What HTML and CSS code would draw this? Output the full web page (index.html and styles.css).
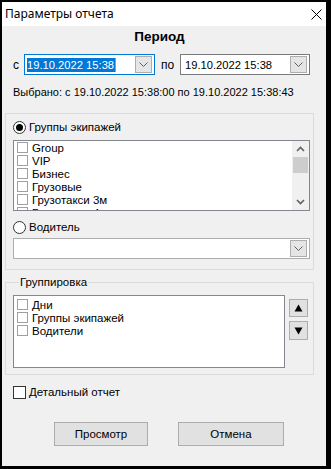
FILE: index.html
```html
<!DOCTYPE html>
<html lang="ru">
<head>
<meta charset="utf-8">
<link rel="stylesheet" href="styles.css">
</head>
<body>
<div class="window">
  <div class="titlebar">
    <span class="title">Параметры отчета</span>
    <svg class="close" width="11" height="11" viewBox="0 0 11 11"><path d="M0.5 0.5 L10.5 10.5 M10.5 0.5 L0.5 10.5" stroke="#000" stroke-width="1" fill="none"/></svg>
  </div>
  <div class="content">
    <div class="period">Период</div>
    <div class="daterow">
      <span class="lbl-s">с</span>
      <div class="combo focused c1">
        <span class="sel">19.10.2022 15:38</span><span class="caret"></span>
        <span class="dd"><svg width="9" height="5" viewBox="0 0 9 5"><path d="M0.5 0.5 L4.5 4.5 L8.5 0.5" stroke="#606060" fill="none"/></svg></span>
      </div>
      <span class="lbl-po">по</span>
      <div class="combo c2">
        <span class="val">19.10.2022 15:38</span>
        <span class="dd"><svg width="9" height="5" viewBox="0 0 9 5"><path d="M0.5 0.5 L4.5 4.5 L8.5 0.5" stroke="#606060" fill="none"/></svg></span>
      </div>
    </div>
    <div class="chosen">Выбрано: с 19.10.2022 15:38:00 по 19.10.2022 15:38:43</div>

    <div class="group g1">
      <div class="radio"><span class="rb checked"></span><span>Группы экипажей</span></div>
      <div class="listbox lb1">
        <div class="items">
          <div class="item"><span class="cb"></span>Group</div>
          <div class="item"><span class="cb"></span>VIP</div>
          <div class="item"><span class="cb"></span>Бизнес</div>
          <div class="item"><span class="cb"></span>Грузовые</div>
          <div class="item"><span class="cb"></span>Грузотакси 3м</div>
          <div class="item"><span class="cb"></span>Грузотакси 4м</div>
        </div>
        <div class="scrollbar">
          <span class="arr"><svg width="9" height="6" viewBox="0 0 9 6"><path d="M1 5 L4.5 1.5 L8 5" stroke="#606060" stroke-width="1.6" fill="none"/></svg></span>
          <span class="thumb"></span>
          <span class="track"></span>
          <span class="arr"><svg width="9" height="6" viewBox="0 0 9 6"><path d="M1 1 L4.5 4.5 L8 1" stroke="#606060" stroke-width="1.6" fill="none"/></svg></span>
        </div>
      </div>
      <div class="radio r2"><span class="rb"></span><span>Водитель</span></div>
      <div class="combo wide">
        <span class="val"></span>
        <span class="dd"><svg width="9" height="5" viewBox="0 0 9 5"><path d="M0.5 0.5 L4.5 4.5 L8.5 0.5" stroke="#606060" fill="none"/></svg></span>
      </div>
    </div>

    <fieldset class="g2">
      <legend>Группировка</legend>
      <div class="g2row">
        <div class="listbox lb2">
          <div class="items">
            <div class="item"><span class="cb"></span>Дни</div>
            <div class="item"><span class="cb"></span>Группы экипажей</div>
            <div class="item"><span class="cb"></span>Водители</div>
          </div>
        </div>
        <div class="updown">
          <span class="ub up"><svg width="9" height="8" viewBox="0 0 9 8"><path d="M4.5 0.5 L8.5 7.5 L0.5 7.5 Z" fill="#000"/></svg></span>
          <span class="ub down"><svg width="9" height="8" viewBox="0 0 9 8"><path d="M0.5 0.5 L8.5 0.5 L4.5 7.5 Z" fill="#000"/></svg></span>
        </div>
      </div>
    </fieldset>

    <div class="detail"><span class="cb big"></span><span>Детальный отчет</span></div>

    <div class="buttons">
      <span class="btn b1">Просмотр</span>
      <span class="btn b2">Отмена</span>
    </div>
  </div>
</div>
</body>
</html>
```

FILE: styles.css
```css
* { box-sizing: border-box; }
html, body { margin: 0; padding: 0; }
body {
  width: 331px;
  height: 469px;
  background: #000;
  font-family: "Liberation Sans", Arial, sans-serif;
  font-size: 11px;
  color: #000;
  overflow: hidden;
}
.window {
  width: 331px;
  height: 469px;
  border-style: solid;
  border-color: #000;
  border-width: 2px 5px 3px 2px;
  background: #f0f0f0;
  display: flex;
  flex-direction: column;
}
.titlebar {
  height: 24px;
  flex: none;
  background: #fff;
  display: flex;
  align-items: center;
  justify-content: space-between;
  padding: 0 4px 0 3px;
}
.title {
  font-family: "Noto Sans", "Open Sans", sans-serif;
  font-size: 12px;
  line-height: 16px;
}
.close { margin-top: 1px; }
.content { flex: 1; display: flex; flex-direction: column; }

.period {
  margin: 3px 0 0 3px;
  width: 309px;
  text-align: center;
  font-weight: bold;
  font-size: 13.5px;
  line-height: 16px;
}
.daterow {
  margin-top: 9px;
  display: flex;
  align-items: center;
  height: 21px;
}
.lbl-s { width: 22px; padding-left: 11px; font-size: 12px; }
.lbl-po { width: 25px; padding-left: 6px; font-size: 12px; }

.combo {
  height: 21px;
  background: #fff;
  border: 1px solid #7a7a7a;
  display: flex;
  align-items: center;
  padding: 1px 2px 1px 2px;
}
.combo.focused { border-color: #0078d7; }
.c1 { width: 131px; }
.c2 { width: 130px; }
.combo .sel {
  background: #0078d7;
  color: #fff;
  font-size: 11.2px;
  line-height: 14px;
  padding-right: 1px;
  white-space: nowrap;
}
.combo .caret { width: 1px; height: 14px; background: #ff8a00; }
.combo .val { font-size: 11.2px; padding-left: 2px; flex: 1; white-space: nowrap; }
.combo .dd {
  margin-left: auto;
  width: 17px;
  height: 17px;
  background: #e5e5e5;
  border: 1px solid #adadad;
  display: flex;
  align-items: center;
  justify-content: center;
}

.chosen {
  margin: 10px 0 0 11px;
  line-height: 14px;
  white-space: nowrap;
}

.group.g1 {
  margin: 14px 0 0 3px;
  width: 309px;
  height: 157px;
  border: 1px solid #dcdcdc;
  padding: 6px 3px 0 7px;
}
.radio {
  display: flex;
  align-items: center;
  height: 14px;
  font-size: 11.5px;
}
.rb {
  width: 13px;
  height: 13px;
  border: 1px solid #333;
  border-radius: 50%;
  background: #fff;
  margin-right: 3px;
  display: flex;
  align-items: center;
  justify-content: center;
}
.rb.checked::after {
  content: "";
  width: 7px;
  height: 7px;
  border-radius: 50%;
  background: #000;
}
.r2 { margin-top: 9px; }

.listbox {
  background: #fff;
  border: 1px solid #828790;
  display: flex;
  overflow: hidden;
}
.lb1 { margin-top: 6px; width: 297px; height: 71px; }
.items { flex: 1; padding-left: 3px; }
.item {
  display: flex;
  align-items: center;
  height: 13px;
  font-size: 11.5px;
  white-space: nowrap;
}
.cb {
  width: 11px;
  height: 11px;
  border: 1px solid #a0a0a0;
  background: #fff;
  margin-right: 4px;
  flex: none;
}
.scrollbar {
  width: 17px;
  background: #f0f0f0;
  display: flex;
  flex-direction: column;
}
.scrollbar .arr {
  height: 16px;
  display: flex;
  align-items: center;
  justify-content: center;
}
.scrollbar .thumb {
  height: 16px;
  margin: 0 1px;
  background: #cdcdcd;
}
.scrollbar .track { flex: 1; }

.combo.wide {
  margin-top: 4px;
  width: 297px;
  border-color: #adadad;
}

fieldset.g2 {
  margin: 5px 0 0 3px;
  width: 309px;
  height: 100px;
  border: 1px solid #dcdcdc;
  padding: 6px 3px 0 7px;
  min-width: 0;
}
.g2 legend {
  padding: 0 1px;
  margin-left: 6px;
  font-size: 11.5px;
  line-height: 14px;
}
.g2row { display: flex; }
.lb2 { width: 272px; height: 73px; padding-top: 2px; }
.updown {
  margin-left: 4px;
  display: flex;
  flex-direction: column;
  padding-top: 4px;
}
.ub {
  width: 19px;
  height: 18px;
  background: #e1e1e1;
  border: 1px solid #adadad;
  display: flex;
  align-items: center;
  justify-content: center;
}
.ub.down { margin-top: 4px; height: 19px; }

.detail {
  margin: 10px 0 0 11px;
  display: flex;
  align-items: center;
  height: 14px;
  font-size: 11.5px;
}
.cb.big {
  width: 13px;
  height: 13px;
  border-color: #333;
  margin-right: 3px;
}

.buttons {
  margin-top: 23px;
  display: flex;
}
.btn {
  height: 24px;
  background: #e1e1e1;
  border: 1px solid #adadad;
  display: flex;
  align-items: center;
  justify-content: center;
  font-size: 11.5px;
}
.b1 { margin-left: 52px; width: 94px; }
.b2 { margin-left: 30px; width: 106px; }
```
